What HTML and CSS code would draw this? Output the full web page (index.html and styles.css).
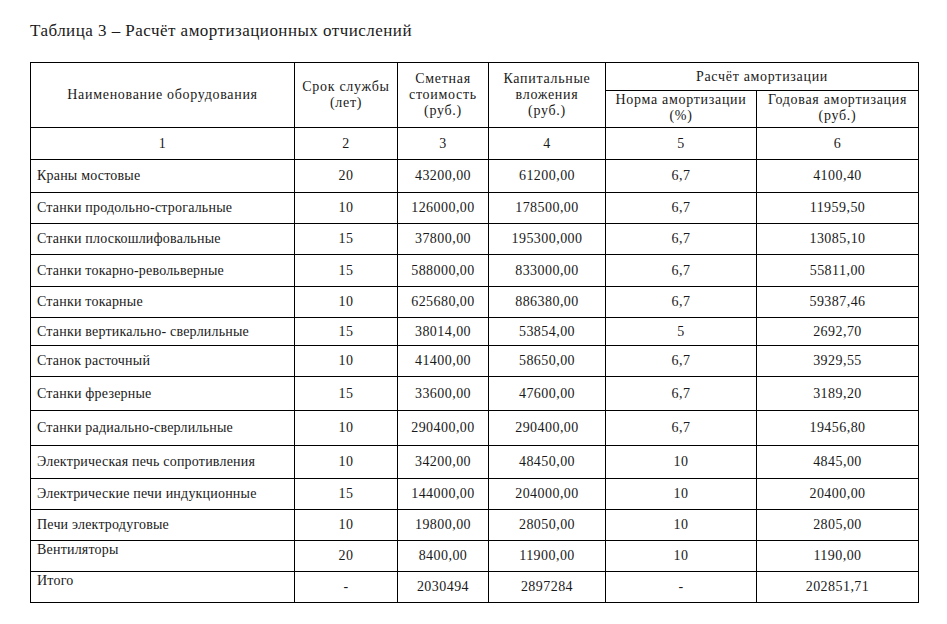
FILE: index.html
```html
<!DOCTYPE html>
<html lang="ru">
<head>
<meta charset="utf-8">
<title>Таблица 3</title>
<link rel="stylesheet" href="styles.css">
</head>
<body>
<div class="page">
  <div class="caption">Таблица 3 – Расчёт амортизационных отчислений</div>
  <table class="tbl">
    <colgroup>
      <col class="c1"><col class="c2"><col class="c3"><col class="c4"><col class="c5"><col class="c6">
    </colgroup>
    <thead>
      <tr class="h1">
        <th rowspan="2">Наименование оборудования</th>
        <th rowspan="2">Срок службы<br>(лет)</th>
        <th rowspan="2">Сметная<br>стоимость<br>(руб.)</th>
        <th rowspan="2">Капитальные<br>вложения<br>(руб.)</th>
        <th colspan="2">Расчёт амортизации</th>
      </tr>
      <tr class="h2">
        <th>Норма амортизации<br>(%)</th>
        <th>Годовая амортизация<br>(руб.)</th>
      </tr>
      <tr class="r32 nums">
        <th>1</th><th>2</th><th>3</th><th>4</th><th>5</th><th>6</th>
      </tr>
    </thead>
    <tbody>
      <tr class="r33"><td class="name">Краны мостовые</td><td>20</td><td>43200,00</td><td>61200,00</td><td>6,7</td><td>4100,40</td></tr>
      <tr class="r31"><td class="name">Станки продольно-строгальные</td><td>10</td><td>126000,00</td><td>178500,00</td><td>6,7</td><td>11959,50</td></tr>
      <tr class="r31"><td class="name">Станки плоскошлифовальные</td><td>15</td><td>37800,00</td><td>195300,000</td><td>6,7</td><td>13085,10</td></tr>
      <tr class="r32"><td class="name">Станки токарно-револьверные</td><td>15</td><td>588000,00</td><td>833000,00</td><td>6,7</td><td>55811,00</td></tr>
      <tr class="r31"><td class="name">Станки токарные</td><td>10</td><td>625680,00</td><td>886380,00</td><td>6,7</td><td>59387,46</td></tr>
      <tr class="r28"><td class="name">Станки вертикально- сверлильные</td><td>15</td><td>38014,00</td><td>53854,00</td><td>5</td><td>2692,70</td></tr>
      <tr class="r31"><td class="name">Станок расточный</td><td>10</td><td>41400,00</td><td>58650,00</td><td>6,7</td><td>3929,55</td></tr>
      <tr class="r34"><td class="name">Станки фрезерные</td><td>15</td><td>33600,00</td><td>47600,00</td><td>6,7</td><td>3189,20</td></tr>
      <tr class="r35"><td class="name">Станки радиально-сверлильные</td><td>10</td><td>290400,00</td><td>290400,00</td><td>6,7</td><td>19456,80</td></tr>
      <tr class="r33"><td class="name">Электрическая печь сопротивления</td><td>10</td><td>34200,00</td><td>48450,00</td><td>10</td><td>4845,00</td></tr>
      <tr class="r31"><td class="name">Электрические печи индукционные</td><td>15</td><td>144000,00</td><td>204000,00</td><td>10</td><td>20400,00</td></tr>
      <tr class="r31"><td class="name">Печи электродуговые</td><td>10</td><td>19800,00</td><td>28050,00</td><td>10</td><td>2805,00</td></tr>
      <tr class="r31"><td class="name top">Вентиляторы</td><td>20</td><td>8400,00</td><td>11900,00</td><td>10</td><td>1190,00</td></tr>
      <tr class="r31"><td class="name top">Итого</td><td>-</td><td>2030494</td><td>2897284</td><td>-</td><td>202851,71</td></tr>
    </tbody>
  </table>
</div>
</body>
</html>
```

FILE: styles.css
```css
html, body {
  margin: 0;
  padding: 0;
  background: #ffffff;
}

.page {
  padding: 20px 0 0 30px;
  font-family: "Liberation Serif", "Times New Roman", serif;
  color: #1a1a1a;
}

.caption {
  font-family: "Liberation Serif", "Times New Roman", serif;
  font-size: 17px;
  line-height: 22px;
  height: 22px;
  margin-bottom: 20px;
  letter-spacing: 0.47px;
}

.tbl {
  border-collapse: collapse;
  table-layout: fixed;
  width: 888px;
  font-family: "Liberation Serif", "Times New Roman", serif;
  font-size: 14px;
  line-height: 16px;
}

.c1 { width: 264px; }
.c2 { width: 103px; }
.c3 { width: 91px; }
.c4 { width: 117px; }
.c5 { width: 151px; }
.c6 { width: 162px; }

.tbl th,
.tbl td {
  font-family: "Liberation Serif", "Times New Roman", serif;
  border: 1px solid #000;
  padding: 0 2px;
  text-align: center;
  vertical-align: middle;
  font-weight: normal;
  letter-spacing: 0.45px;
}

.tbl thead th {
  letter-spacing: 0.7px;
}

.h1 { height: 28px; }
.h2 { height: 37px; }

.h2 th {
  vertical-align: top;
  padding-top: 1px;
}

.tbl td.name {
  text-align: left;
  padding-left: 6px;
  letter-spacing: 0.2px;
}

.tbl td.top {
  vertical-align: top;
  padding-top: 1px;
}

.r28 { height: 28px; }
.r31 { height: 31px; }
.r32 { height: 32px; }
.r33 { height: 33px; }
.r34 { height: 34px; }
.r35 { height: 35px; }
```
